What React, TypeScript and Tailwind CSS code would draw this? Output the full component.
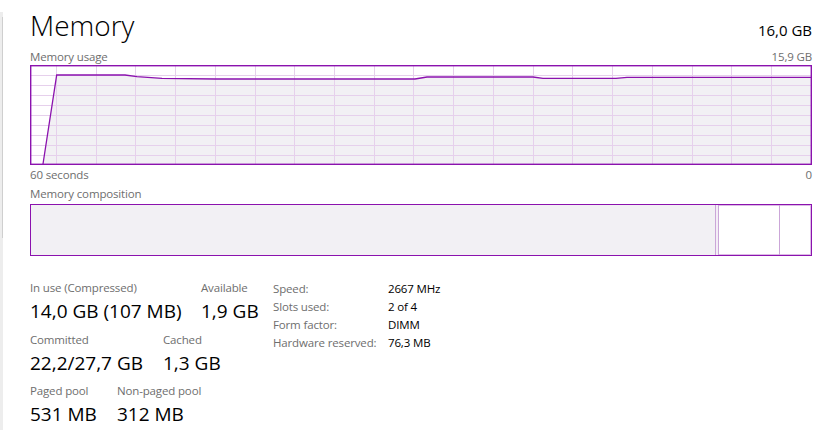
const font = { fontFamily: '"Open Sans", "Noto Sans", sans-serif' };

const GRAPH_W = 782;
const GRAPH_H = 100;

// memory usage line, in graph coordinates (origin = top-left of the box)
const usage: [number, number][] = [
  [13, 99],
  [26.7, 10],
  [95, 10],
  [107, 11.7],
  [132, 13.3],
  [185, 14],
  [385, 14],
  [397, 12],
  [503, 12],
  [513, 13.3],
  [586, 13.3],
  [597, 12.3],
  [782, 12.3],
];

function UsageGraph() {
  const cols = Array.from({ length: 19 }, (_, k) => Math.round(26 + 39.72 * k));
  const rows = [10, 20, 30, 40, 50, 60, 70, 80, 90];
  const line = usage.map(([x, y]) => `${x},${y}`).join(' ');
  const area = `${line} ${GRAPH_W},${GRAPH_H} 13,${GRAPH_H}`;

  return (
    <svg width={GRAPH_W} height={GRAPH_H} className="block">
      <rect x={0} y={0} width={GRAPH_W} height={GRAPH_H} fill="#ffffff" />
      <polygon points={area} fill="#f2f0f4" />
      <g shapeRendering="crispEdges" stroke="#e6d0ec" strokeWidth={1}>
        {cols.map((x) => (
          <line key={x} x1={x + 0.5} y1={0} x2={x + 0.5} y2={GRAPH_H} />
        ))}
        {rows.map((y) => (
          <line key={y} x1={0} y1={y + 0.5} x2={GRAPH_W} y2={y + 0.5} />
        ))}
      </g>
      <polyline points={line} fill="none" stroke="#8b12ae" strokeWidth={1.3} />
      <rect
        x={0.7}
        y={0.7}
        width={GRAPH_W - 1.4}
        height={GRAPH_H - 1.4}
        fill="none"
        stroke="#8b12ae"
        strokeWidth={1.4}
      />
    </svg>
  );
}

function CompositionBar() {
  return (
    <div className="flex h-[52px] w-[782px] border border-[#8b12ae] shadow-[inset_0_0_0_1px_#dcbbe6]">
      <div className="w-[685px] border-r border-[#cba6d8] bg-[#f2f0f4]" />
      <div className="w-[3px] border-r border-[#cba6d8] bg-[#f4eef6]" />
      <div className="w-[61px] border-r border-[#cba6d8]" />
      <div className="flex-1" />
    </div>
  );
}

interface StatProps {
  label: string;
  value: string;
  width?: string;
}

function Stat({ label, value, width }: StatProps) {
  return (
    <div className={width}>
      <div className="h-[16px] text-[11.5px] leading-[16px] tracking-[-0.15px] text-[#6e6e6e]">
        {label}
      </div>
      <div className="mt-[2px] h-[26px] text-[19px] leading-[26px] text-black">{value}</div>
    </div>
  );
}

const details: [string, string][] = [
  ['Speed:', '2667 MHz'],
  ['Slots used:', '2 of 4'],
  ['Form factor:', 'DIMM'],
  ['Hardware reserved:', '76,3 MB'],
];

export default function App() {
  return (
    <div className="flex h-[430px] w-[824px] overflow-hidden bg-white" style={font}>
      <div className="mt-[12px] flex w-[3px] flex-col bg-[#ededed]">
        <div className="ml-[2px] mt-[5px] h-[221px] w-[1px] bg-[#cfcfcf]" />
      </div>

      <div className="flex w-[809px] flex-col pl-[27px]">
        <div className="box-content flex h-[36px] w-[782px] items-baseline justify-between pt-[7px]">
          <span className="text-[28px] font-light leading-[36px] text-black">Memory</span>
          <span className="text-[15px] leading-[36px] text-black">16,0 GB</span>
        </div>

        <div className="mt-[6px] flex h-[16px] w-[782px] justify-between text-[11.5px] leading-[16px] tracking-[-0.15px] text-[#6e6e6e]">
          <span>Memory usage</span>
          <span>15,9 GB</span>
        </div>

        <UsageGraph />

        <div className="flex h-[18px] w-[782px] justify-between pt-[2px] text-[11.5px] leading-[16px] tracking-[-0.15px] text-[#6e6e6e]">
          <span>60 seconds</span>
          <span>0</span>
        </div>

        <div className="mt-[3px] h-[16px] text-[11.5px] leading-[16px] tracking-[-0.15px] text-[#6e6e6e]">
          Memory composition
        </div>

        <div className="mt-[2px]">
          <CompositionBar />
        </div>

        <div className="mt-[24px] flex">
          <div className="flex w-[243px] flex-col gap-[7.5px]">
            <div className="flex">
              <Stat label="In use (Compressed)" value="14,0 GB (107 MB)" width="w-[171px]" />
              <Stat label="Available" value="1,9 GB" />
            </div>
            <div className="flex">
              <Stat label="Committed" value="22,2/27,7 GB" width="w-[133px]" />
              <Stat label="Cached" value="1,3 GB" />
            </div>
            <div className="flex">
              <Stat label="Paged pool" value="531 MB" width="w-[87px]" />
              <Stat label="Non-paged pool" value="312 MB" />
            </div>
          </div>

          <div className="flex flex-col text-[11.5px] leading-[18px] tracking-[-0.15px]">
            {details.map(([k, v]) => (
              <div key={k} className="flex h-[18px]">
                <span className="w-[115px] text-[#6e6e6e]">{k}</span>
                <span className="text-black">{v}</span>
              </div>
            ))}
          </div>
        </div>
      </div>
    </div>
  );
}
